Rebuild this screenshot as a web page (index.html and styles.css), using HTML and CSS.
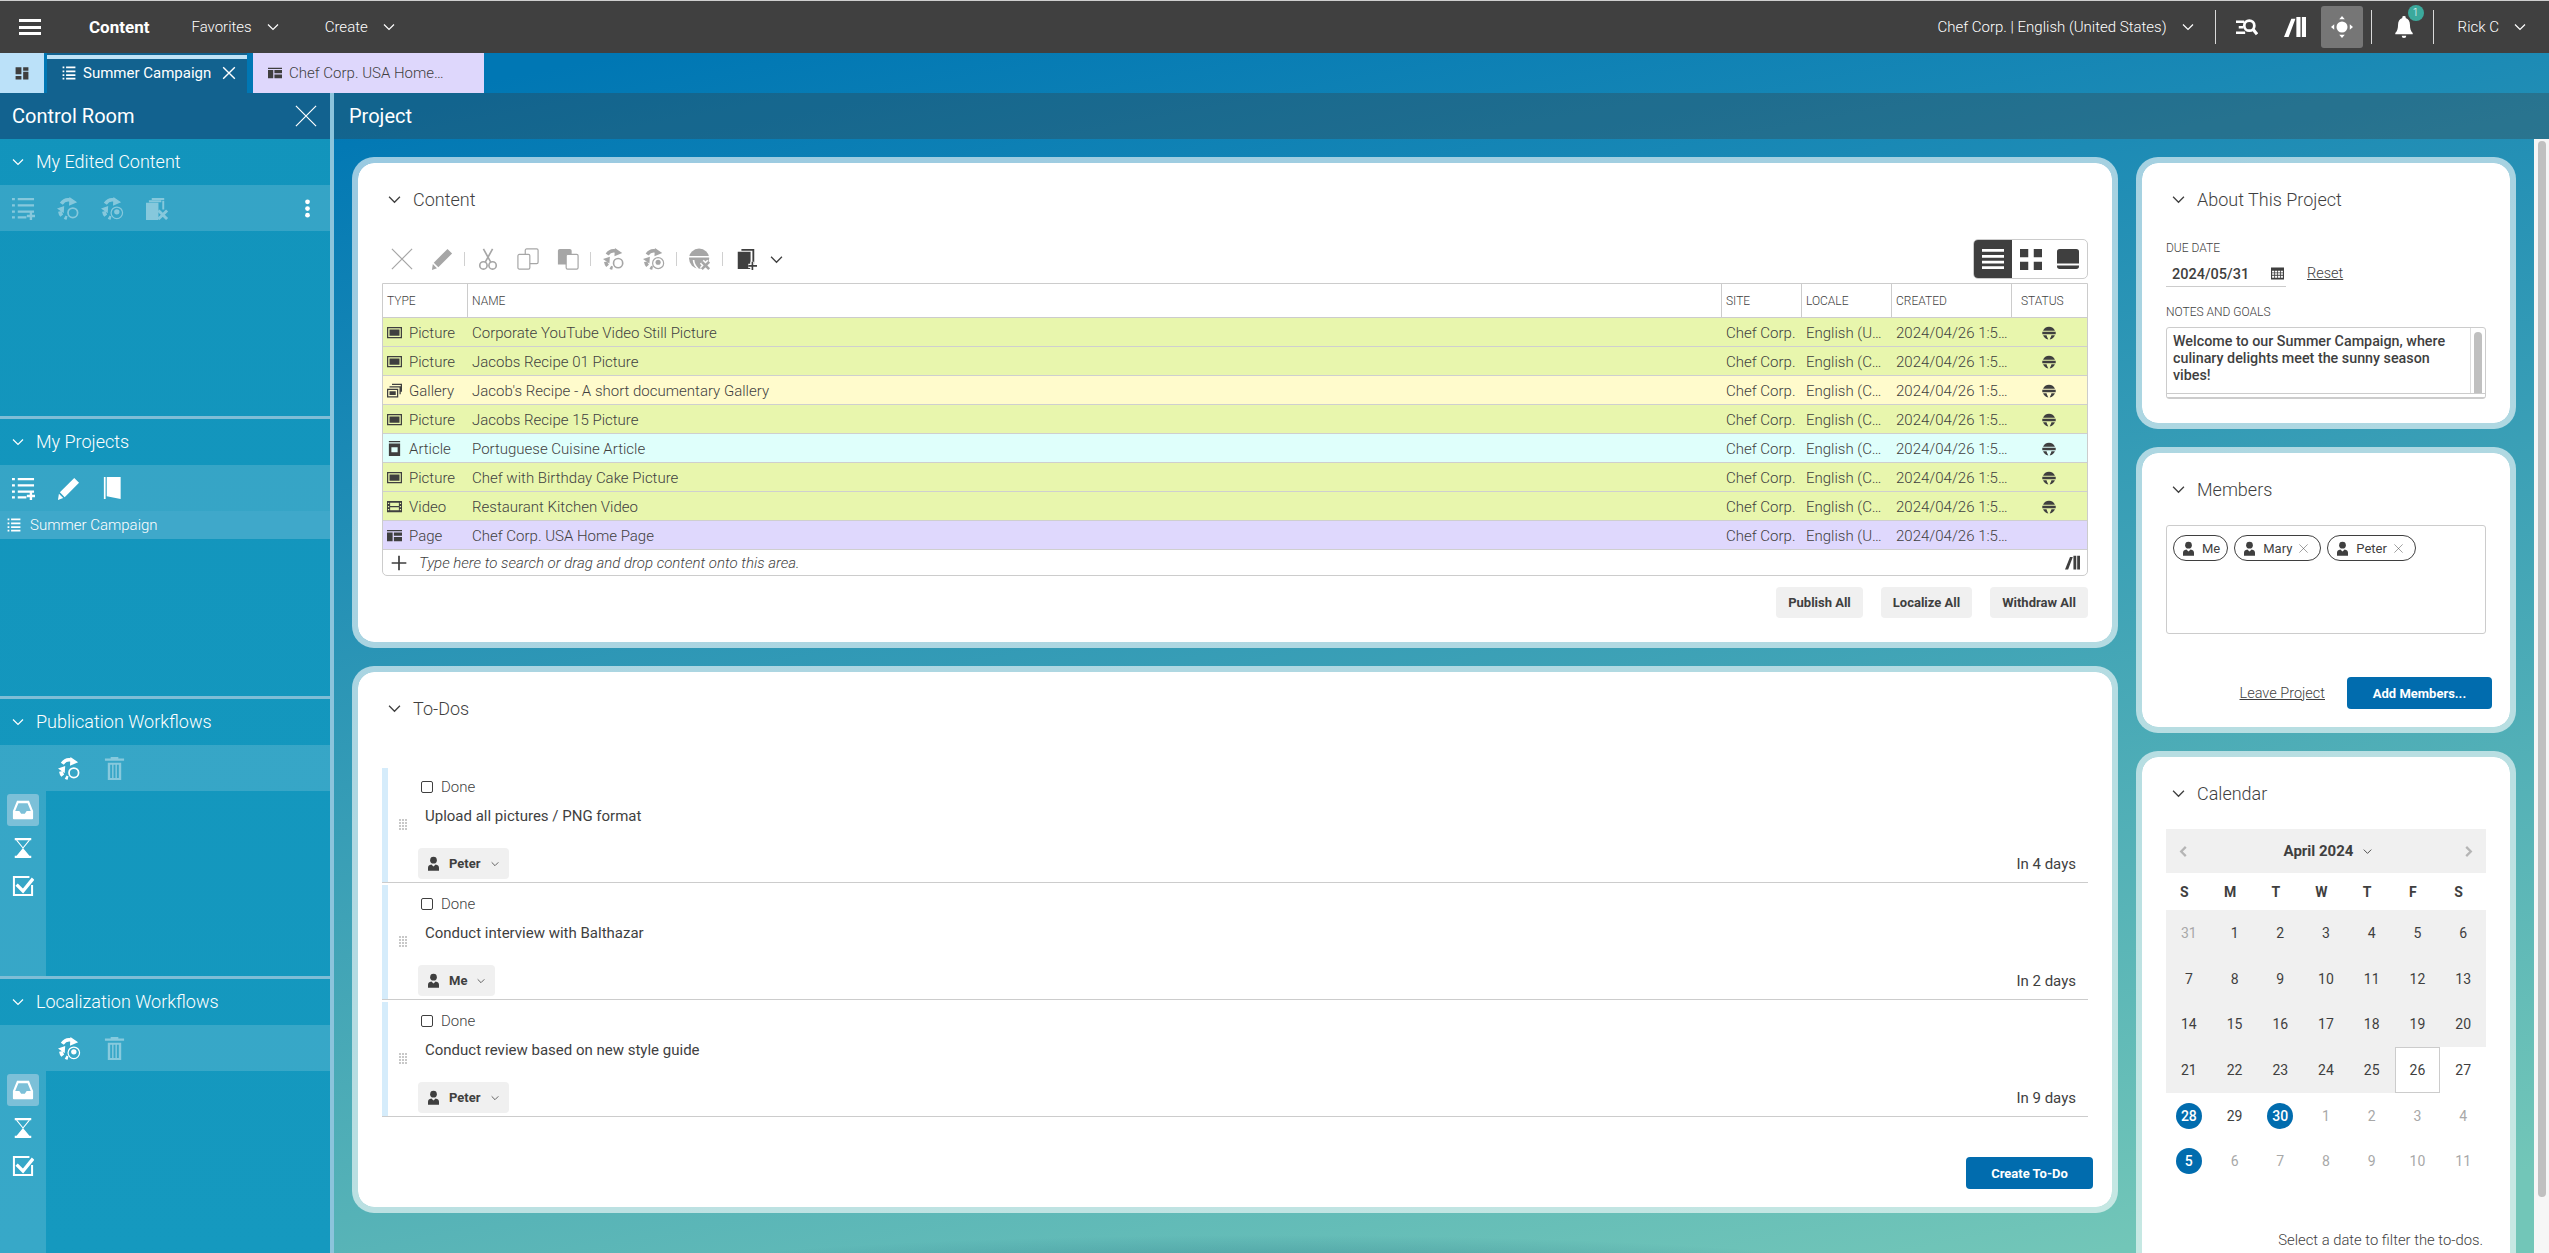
FILE: index.html
```html
<!DOCTYPE html>
<html lang="en">

<head>
  <meta charset="UTF-8" />
  <title>Content - Project</title>
  <link rel="stylesheet" href="styles.css">
</head>

<body>

  <!-- Icon sheet -->
  <svg class="sheet" xmlns="http://www.w3.org/2000/svg">
    <symbol id="i-chev" viewBox="0 0 24 24"><path d="M2 7l10 10L22 7" fill="none" stroke="currentColor" stroke-width="2.4"/></symbol>
    <symbol id="i-x" viewBox="0 0 24 24"><path d="M1 1l22 22M23 1L1 23" fill="none" stroke="currentColor" stroke-width="1.3"/></symbol>
    <symbol id="i-x2" viewBox="0 0 24 24"><path d="M2 2l20 20M22 2L2 22" fill="none" stroke="currentColor" stroke-width="2.4"/></symbol>
    <symbol id="i-home" viewBox="0 0 24 24"><path d="M1 2h10v12H1zM14 2h9v6h-9zM14 10h9v13h-9zM1 17h10v6H1z"/></symbol>
    <symbol id="i-list" viewBox="0 0 24 24"><path d="M1 1h3v3H1zM7 1h16v3H7zM1 7.500h3v3H1zM7 7.500h16v3H7zM1 14h3v3H1zM7 14h16v3H7zM1 20h3v3H1zM7 20h16v3H7z"/></symbol>
    <symbol id="i-listadd" viewBox="0 0 24 24"><path d="M0 1h3v2.500H0zM6 1h17v2.500H6zM0 7.500h3V10H0zM6 7.500h17V10H6zM0 14h3v2.500H0zM6 14h17v2.500H6zM0 20h3v2.500H0zM6 20h9v2.500H6zM18.500 14.500h2.500v4h3V21h-3v3h-2.500v-3h-3v-2.500h3z"/></symbol>
    <symbol id="i-page" viewBox="0 0 24 24"><path d="M0 3h24v2.200H0zM0 7h9v14H0zM11 7h13v5.500H11zM11 14.500h13V21H11z"/></symbol>
    <symbol id="i-cycle" viewBox="0 0 24 24"><g fill="none" stroke="currentColor" stroke-width="3.800"><path d="M4.500 7A9 9 0 0 1 14 3.200"/><path d="M5 19.500A9 9 0 0 1 3 15"/><path d="M8 21a9 9 0 0 0 2.500 1"/></g><path d="M13 0l8 5.500-8.500 3.500zM0 12l7.500-2.500-.5 7.500z"/><circle cx="16.500" cy="16.500" r="5" fill="none" stroke="currentColor" stroke-width="1.800"/></symbol>
    <symbol id="i-cycle2" viewBox="0 0 24 24"><g fill="none" stroke="currentColor" stroke-width="3.800"><path d="M4.500 7A9 9 0 0 1 14 3.200"/><path d="M5 19.500A9 9 0 0 1 3 15"/><path d="M8 21a9 9 0 0 0 2.500 1"/></g><path d="M13 0l8 5.500-8.500 3.500zM0 12l7.500-2.500-.5 7.500z"/><circle cx="16.500" cy="16.500" r="6" fill="none" stroke="currentColor" stroke-width="1.300"/><circle cx="16.500" cy="15.500" r="2.800"/></symbol>
    <symbol id="i-docsx" viewBox="0 0 24 24"><path d="M0 6h13v18H0zM3 3.500h13v2H3zM6 1h13v2H6zM17 4h2v9h-2z"/><path d="M13 14l9 9M22 14l-9 9" fill="none" stroke="currentColor" stroke-width="3"/></symbol>
    <symbol id="i-pencil" viewBox="0 0 24 24"><path d="M18 1l5 5L8 21l-5-5zM2 17.500L6.500 22 1 24z"/></symbol>
    <symbol id="i-door" viewBox="0 0 24 24"><path d="M3 0h1.800v23H3zM6 0h14.500v23L6 20z"/></symbol>
    <symbol id="i-trash" viewBox="0 0 24 24"><path d="M8 0h8v1.500h6v2.500H2V1.500h6zM5 6h14v18H5zM7.500 8v14h2V8zM11 8v14h2V8zM14.500 8v14h2V8z" fill-rule="evenodd"/></symbol>
    <symbol id="i-tray" viewBox="0 0 24 24"><path fill-rule="evenodd" d="M5.500 2h13L23 13v8a1 1 0 0 1-1 1H2a1 1 0 0 1-1-1v-8zM7 4.500L3.500 13H8l2 3h4l2-3h4.500L17 4.500z"/></symbol>
    <symbol id="i-glass" viewBox="0 0 24 24"><path d="M3 1h18v2.500H3zM12 12l7 8.500h2V23H3v-2.500h2z"/><path d="M5 3.500l7 8.500 7-8.500" fill="none" stroke="currentColor" stroke-width="1.200"/></symbol>
    <symbol id="i-check" viewBox="0 0 24 24"><path d="M1 1h18v2.200H3.200v17.600h17.600V11H23v12H1z"/><path d="M5 10.500l7 7L23 4" fill="none" stroke="currentColor" stroke-width="3.600"/></symbol>
    <symbol id="i-kebab" viewBox="0 0 24 24"><circle cx="12" cy="3.500" r="3"/><circle cx="12" cy="12" r="3"/><circle cx="12" cy="20.500" r="3"/></symbol>
    <symbol id="i-cut" viewBox="0 0 24 24"><g fill="none" stroke="currentColor" stroke-width="1.800"><circle cx="7" cy="19" r="4"/><circle cx="17" cy="19" r="4"/><path d="M9 15.500L17 1M15 15.500L7 1"/></g></symbol>
    <symbol id="i-copy" viewBox="0 0 24 24"><g fill="none" stroke="currentColor" stroke-width="1.300"><rect x="1" y="7" width="13" height="16" rx="1.500"/><path d="M9 7V2.500A1.500 1.500 0 0 1 10.500 1h11A1.500 1.500 0 0 1 23 2.500v13a1.500 1.500 0 0 1-1.500 1.500H14"/></g></symbol>
    <symbol id="i-paste" viewBox="0 0 24 24"><path d="M1 3a2 2 0 0 1 2-2h11a2 2 0 0 1 2 2v15H1z"/><rect x="10" y="7" width="13" height="16" rx="1.500" fill="#fff" stroke="currentColor" stroke-width="1.300"/></symbol>
    <symbol id="i-globex" viewBox="0 0 24 24"><circle cx="11" cy="11.500" r="11"/><path d="M0 9.500h22M5 13c0 4 2 7 5 10" fill="none" stroke="#fff" stroke-width="1.800"/><path d="M14 15l8 8M22 15l-8 8" fill="none" stroke="#fff" stroke-width="6"/><path d="M14 15l8 8M22 15l-8 8" fill="none" stroke="currentColor" stroke-width="2.800"/></symbol>
    <symbol id="i-newdoc" viewBox="0 0 24 24"><path d="M3 4h14v19H3zM7 1h14v17h-2V3H7z"/><path d="M19 15v9M14.500 19.500H24" fill="none" stroke="#fff" stroke-width="4.500"/><path d="M19 15v9M14.500 19.500H24" fill="none" stroke="currentColor" stroke-width="1.800"/></symbol>
    <symbol id="i-pic" viewBox="0 0 24 24"><path fill-rule="evenodd" d="M0 3h24v18H0zM2 5v14h20V5z"/><path d="M4 7h16v10H4z"/></symbol>
    <symbol id="i-gallery" viewBox="0 0 24 24"><path fill-rule="evenodd" d="M0 9h18v14H0zM2 11v10h14V11zM4 13h10v6H4z"/><path d="M4 5h18v13h-2V7H4zM8 1h16v13h-2V3H8z"/></symbol>
    <symbol id="i-article" viewBox="0 0 24 24"><path fill-rule="evenodd" d="M3 0h18v2H3zM3 4h18v20H3zM7 10v8h10v-8z"/></symbol>
    <symbol id="i-video" viewBox="0 0 24 24"><path fill-rule="evenodd" d="M0 3h24v18H0zM5 6v5h14V6zM5 13v5h14v-5zM1.500 6v2h2V6zM1.500 11v2h2v-2zM1.500 16v2h2v-2zM20.500 6v2h2V6zM20.500 11v2h2v-2zM20.500 16v2h2v-2z"/></symbol>
    <symbol id="i-status" viewBox="0 0 24 24"><path d="M1.800 8A11 11 0 0 1 22.200 8zM0.500 9.800h23V14h-23zM1.800 16h6c.8 3 2 5.500 3 7A11 11 0 0 1 1.800 16zM22.200 16h-6c-.8 3-2 5.500-3 7A11 11 0 0 0 22.200 16z"/></symbol>
    <symbol id="i-vlist" viewBox="0 0 24 24"><path d="M0 1h24v3H0zM0 7.500h24v3H0zM0 14h24v3H0zM0 20h24v3H0z"/></symbol>
    <symbol id="i-vgrid" viewBox="0 0 24 24"><path d="M0 1h9v9H0zM15 1h9v9h-9zM0 15h9v9H0zM15 15h9v9h-9z"/></symbol>
    <symbol id="i-vcard" viewBox="0 0 24 24"><path d="M3 1h18a3 3 0 0 1 3 3v13H0V4a3 3 0 0 1 3-3zM0 19h24v1a3 3 0 0 1-3 3H3a3 3 0 0 1-3-3z"/></symbol>
    <symbol id="i-person" viewBox="0 0 18 24"><circle cx="9" cy="6.500" r="5.500"/><path d="M0 24v-5c0-3 2-5 5.500-5.500L9 17l3.500-3.500C16 14 18 16 18 19v5z"/></symbol>
    <symbol id="i-lib" viewBox="0 0 24 24"><path d="M8 3h4.500L5 23H0zM13.500 1H18v22h-4.500zM19.500 1H24v22h-4.500z"/></symbol>
    <symbol id="i-search" viewBox="0 0 24 24"><path d="M0 5h9v2.500H0zM3 11h5v2.500H3zM0 17h10v2.500H0z"/><circle cx="14.500" cy="10.500" r="5.500" fill="none" stroke="currentColor" stroke-width="3"/><path d="M18.500 14.500L23 20" fill="none" stroke="currentColor" stroke-width="3.500"/></symbol>
    <symbol id="i-target" viewBox="0 0 24 24"><circle cx="12" cy="12" r="6"/><path d="M12 0l3 3.500H9zM12 24l-3-3.500h6zM0 12l3.500-3v6zM24 12l-3.500 3V9z"/></symbol>
    <symbol id="i-bell" viewBox="0 0 24 24"><path d="M12 0a1.800 1.800 0 0 1 1.800 2.200C17 3 18.500 6 18.500 9.500c0 4 .8 7 3 9V20h-19v-1.500c2.200-2 3-5 3-9 0-3.500 1.500-6.500 4.700-7.300A1.800 1.800 0 0 1 12 0zM9.500 21.500h5a2.500 2.500 0 0 1-5 0z"/></symbol>
    <symbol id="i-cal" viewBox="0 0 24 24"><path fill-rule="evenodd" d="M0 1h24v22H0zM2 7v3h4V7zM7.500 7v3h4V7zM13 7v3h4V7zM18.500 7v3H22V7zM2 11.500v3h4v-3zM7.500 11.500v3h4v-3zM13 11.500v3h4v-3zM18.500 11.500v3H22v-3zM2 16v4h4v-4zM7.500 16v4h4v-4zM13 16v4h4v-4zM18.500 16v4H22v-4z"/></symbol>
    <symbol id="i-plus" viewBox="0 0 24 24"><path d="M12 1v22M1 12h22" fill="none" stroke="currentColor" stroke-width="2.600"/></symbol>
    <symbol id="i-grip" viewBox="0 0 8 12"><path d="M0 0h2v2H0zM3 0h2v2H3zM6 0h2v2H6zM0 3h2v2H0zM3 3h2v2H3zM6 3h2v2H6zM0 6h2v2H0zM3 6h2v2H3zM6 6h2v2H6zM0 9h2v2H0zM3 9h2v2H3zM6 9h2v2H6z"/></symbol>
    <symbol id="i-left" viewBox="0 0 24 24"><path d="M17 2L7 12l10 10" fill="none" stroke="currentColor" stroke-width="5"/></symbol>
    <symbol id="i-right" viewBox="0 0 24 24"><path d="M7 2l10 10L7 22" fill="none" stroke="currentColor" stroke-width="5"/></symbol>
  </svg>

  <!-- Top bar -->
  <header class="topbar">
    <span class="burger-bars"><i></i><i></i><i></i></span>
    <span class="top-current">Content</span>
    <span class="top-menu top-fav">Favorites <svg class="ic chev-top"><use href="#i-chev"/></svg></span>
    <span class="top-menu top-create">Create <svg class="ic chev-top"><use href="#i-chev"/></svg></span>

    <div class="top-right">
      <span class="top-menu">Chef Corp. | English (United States) <svg class="ic chev-top"><use href="#i-chev"/></svg></span>
      <span class="top-sep sep-a"></span>
      <svg class="ic top-ic ic-search"><use href="#i-search"/></svg>
      <svg class="ic top-ic ic-lib"><use href="#i-lib"/></svg>
      <span class="top-active"><svg class="ic top-ic"><use href="#i-target"/></svg></span>
      <span class="top-sep sep-b"></span>
      <span class="bell">
        <svg class="ic top-ic"><use href="#i-bell"/></svg>
        <span class="badge">1</span>
      </span>
      <span class="top-sep sep-c"></span>
      <span class="top-menu top-user">Rick C <svg class="ic chev-top"><use href="#i-chev"/></svg></span>
    </div>
  </header>

  <!-- Tabs -->
  <nav class="tabs">
    <span class="tab-home"><svg class="ic ic-14"><use href="#i-home"/></svg></span>
    <span class="tab tab-active">
      <svg class="ic ic-14"><use href="#i-list"/></svg>
      <span class="tab-label">Summer Campaign</span>
      <svg class="ic ic-14 tab-close"><use href="#i-x2"/></svg>
    </span>
    <span class="tab tab-page">
      <svg class="ic ic-14"><use href="#i-page"/></svg>
      <span class="tab-label">Chef Corp. USA Home…</span>
    </span>
  </nav>

  <div class="workspace">

    <!-- Control room -->
    <aside class="control">
      <div class="control-title">
        <span>Control Room</span>
        <svg class="ic ic-22"><use href="#i-x"/></svg>
      </div>

      <section class="side">
        <div class="side-head"><svg class="ic side-chev"><use href="#i-chev"/></svg>My Edited Content</div>
        <div class="side-tools dim">
          <svg class="ic ic-23"><use href="#i-listadd"/></svg>
          <svg class="ic ic-23"><use href="#i-cycle"/></svg>
          <svg class="ic ic-23"><use href="#i-cycle2"/></svg>
          <svg class="ic ic-23"><use href="#i-docsx"/></svg>
          <svg class="ic kebab"><use href="#i-kebab"/></svg>
        </div>
      </section>

      <section class="side">
        <div class="side-head"><svg class="ic side-chev"><use href="#i-chev"/></svg>My Projects</div>
        <div class="side-tools">
          <svg class="ic ic-23"><use href="#i-listadd"/></svg>
          <svg class="ic ic-23"><use href="#i-pencil"/></svg>
          <svg class="ic ic-23"><use href="#i-door"/></svg>
        </div>
        <div class="side-row"><svg class="ic ic-14"><use href="#i-list"/></svg>Summer Campaign</div>
      </section>

      <section class="side">
        <div class="side-head"><svg class="ic side-chev"><use href="#i-chev"/></svg>Publication Workflows</div>
        <div class="side-tools indent">
          <svg class="ic ic-23"><use href="#i-cycle"/></svg>
          <svg class="ic ic-23 faint"><use href="#i-trash"/></svg>
        </div>
        <div class="side-body">
          <div class="rail">
            <span class="rail-on"><svg class="ic ic-22"><use href="#i-tray"/></svg></span>
            <svg class="ic ic-22 rail-glass"><use href="#i-glass"/></svg>
            <svg class="ic ic-22 rail-check"><use href="#i-check"/></svg>
          </div>
        </div>
      </section>

      <section class="side side-last">
        <div class="side-head"><svg class="ic side-chev"><use href="#i-chev"/></svg>Localization Workflows</div>
        <div class="side-tools indent">
          <svg class="ic ic-23"><use href="#i-cycle2"/></svg>
          <svg class="ic ic-23 faint"><use href="#i-trash"/></svg>
        </div>
        <div class="side-body">
          <div class="rail">
            <span class="rail-on"><svg class="ic ic-22"><use href="#i-tray"/></svg></span>
            <svg class="ic ic-22 rail-glass"><use href="#i-glass"/></svg>
            <svg class="ic ic-22 rail-check"><use href="#i-check"/></svg>
          </div>
        </div>
      </section>
    </aside>

    <!-- Project -->
    <main class="project">
      <div class="project-title">Project</div>
      <div class="project-scroll">
        <div class="board">

          <div class="col-main">
            <div class="card">
              <div class="card-head"><svg class="ic card-chev"><use href="#i-chev"/></svg>Content</div>

              <div class="toolbar">
                <svg class="ic ic-22 off"><use href="#i-x"/></svg>
                <svg class="ic ic-22 off"><use href="#i-pencil"/></svg>
                <span class="tool-sep"></span>
                <svg class="ic ic-22 off"><use href="#i-cut"/></svg>
                <svg class="ic ic-22 off"><use href="#i-copy"/></svg>
                <svg class="ic ic-22 off"><use href="#i-paste"/></svg>
                <span class="tool-sep"></span>
                <svg class="ic ic-22 off"><use href="#i-cycle"/></svg>
                <svg class="ic ic-22 off"><use href="#i-cycle2"/></svg>
                <span class="tool-sep"></span>
                <svg class="ic ic-22 off"><use href="#i-globex"/></svg>
                <span class="tool-sep"></span>
                <svg class="ic ic-22"><use href="#i-newdoc"/></svg>
                <svg class="ic tool-chev"><use href="#i-chev"/></svg>
                <div class="views">
                  <span class="view view-on"><svg class="ic ic-22"><use href="#i-vlist"/></svg></span>
                  <span class="view"><svg class="ic ic-22"><use href="#i-vgrid"/></svg></span>
                  <span class="view"><svg class="ic ic-22"><use href="#i-vcard"/></svg></span>
                </div>
              </div>

              <div class="grid-wrap">
                <table class="grid">
                  <colgroup>
                    <col class="c-type"><col><col class="c-site"><col class="c-locale"><col class="c-created"><col class="c-status">
                  </colgroup>
                  <thead>
                    <tr><th>Type</th><th>Name</th><th>Site</th><th>Locale</th><th>Created</th><th class="th-status">Status</th></tr>
                  </thead>
                  <tbody>
                    <tr class="r-pic">
                      <td><svg class="ic ic-15"><use href="#i-pic"/></svg>Picture</td><td>Corporate YouTube Video Still Picture</td><td>Chef Corp.</td><td>English (U…</td><td>2024/04/26 1:5…</td><td class="status"><svg class="ic ic-14"><use href="#i-status"/></svg></td>
                    </tr>
                    <tr class="r-pic">
                      <td><svg class="ic ic-15"><use href="#i-pic"/></svg>Picture</td><td>Jacobs Recipe 01 Picture</td><td>Chef Corp.</td><td>English (C…</td><td>2024/04/26 1:5…</td><td class="status"><svg class="ic ic-14"><use href="#i-status"/></svg></td>
                    </tr>
                    <tr class="r-gal">
                      <td><svg class="ic ic-15"><use href="#i-gallery"/></svg>Gallery</td><td>Jacob's Recipe - A short documentary Gallery</td><td>Chef Corp.</td><td>English (C…</td><td>2024/04/26 1:5…</td><td class="status"><svg class="ic ic-14"><use href="#i-status"/></svg></td>
                    </tr>
                    <tr class="r-pic">
                      <td><svg class="ic ic-15"><use href="#i-pic"/></svg>Picture</td><td>Jacobs Recipe 15 Picture</td><td>Chef Corp.</td><td>English (C…</td><td>2024/04/26 1:5…</td><td class="status"><svg class="ic ic-14"><use href="#i-status"/></svg></td>
                    </tr>
                    <tr class="r-art">
                      <td><svg class="ic ic-15"><use href="#i-article"/></svg>Article</td><td>Portuguese Cuisine Article</td><td>Chef Corp.</td><td>English (C…</td><td>2024/04/26 1:5…</td><td class="status"><svg class="ic ic-14"><use href="#i-status"/></svg></td>
                    </tr>
                    <tr class="r-pic">
                      <td><svg class="ic ic-15"><use href="#i-pic"/></svg>Picture</td><td>Chef with Birthday Cake Picture</td><td>Chef Corp.</td><td>English (C…</td><td>2024/04/26 1:5…</td><td class="status"><svg class="ic ic-14"><use href="#i-status"/></svg></td>
                    </tr>
                    <tr class="r-pic">
                      <td><svg class="ic ic-15"><use href="#i-video"/></svg>Video</td><td>Restaurant Kitchen Video</td><td>Chef Corp.</td><td>English (C…</td><td>2024/04/26 1:5…</td><td class="status"><svg class="ic ic-14"><use href="#i-status"/></svg></td>
                    </tr>
                    <tr class="r-page">
                      <td><svg class="ic ic-15"><use href="#i-page"/></svg>Page</td><td>Chef Corp. USA Home Page</td><td>Chef Corp.</td><td>English (U…</td><td>2024/04/26 1:5…</td><td class="status"></td>
                    </tr>
                  </tbody>
                </table>
                <div class="grid-add">
                  <svg class="ic add-plus"><use href="#i-plus"/></svg>
                  <span>Type here to search or drag and drop content onto this area.</span>
                  <svg class="ic add-lib"><use href="#i-lib"/></svg>
                </div>
              </div>

              <div class="grid-actions">
                <button class="btn-soft b-publish">Publish All</button>
                <button class="btn-soft b-localize">Localize All</button>
                <button class="btn-soft b-withdraw">Withdraw All</button>
              </div>
            </div>

            <div class="card card-todos">
              <div class="card-head"><svg class="ic card-chev"><use href="#i-chev"/></svg>To-Dos</div>

              <div class="todos">
                <div class="todo-wrap">
                  <div class="todo">
                    <svg class="ic grip"><use href="#i-grip"/></svg>
                    <div class="todo-body">
                      <div class="todo-done"><span class="box"></span>Done</div>
                      <div class="todo-text">Upload all pictures / PNG format</div>
                      <span class="assign a-peter"><svg class="ic person"><use href="#i-person"/></svg>Peter<svg class="ic assign-chev"><use href="#i-chev"/></svg></span>
                    </div>
                    <div class="todo-due">In 4 days</div>
                  </div>
                </div>
                <div class="todo-wrap">
                  <div class="todo">
                    <svg class="ic grip"><use href="#i-grip"/></svg>
                    <div class="todo-body">
                      <div class="todo-done"><span class="box"></span>Done</div>
                      <div class="todo-text">Conduct interview with Balthazar</div>
                      <span class="assign a-me"><svg class="ic person"><use href="#i-person"/></svg>Me<svg class="ic assign-chev"><use href="#i-chev"/></svg></span>
                    </div>
                    <div class="todo-due">In 2 days</div>
                  </div>
                </div>
                <div class="todo-wrap">
                  <div class="todo">
                    <svg class="ic grip"><use href="#i-grip"/></svg>
                    <div class="todo-body">
                      <div class="todo-done"><span class="box"></span>Done</div>
                      <div class="todo-text">Conduct review based on new style guide</div>
                      <span class="assign a-peter"><svg class="ic person"><use href="#i-person"/></svg>Peter<svg class="ic assign-chev"><use href="#i-chev"/></svg></span>
                    </div>
                    <div class="todo-due">In 9 days</div>
                  </div>
                </div>
              </div>

              <div class="todo-actions"><button class="btn-blue b-create">Create To-Do</button></div>
            </div>
          </div>

          <div class="col-side">
            <div class="card card-about">
              <div class="card-head"><svg class="ic card-chev"><use href="#i-chev"/></svg>About This Project</div>
              <div class="field-label">Due Date</div>
              <div class="date-row">
                <span class="date-input">2024/05/31<svg class="ic ic-13"><use href="#i-cal"/></svg></span>
                <span class="link">Reset</span>
              </div>
              <div class="field-label notes-label">Notes and Goals</div>
              <div class="notes">
                <div class="notes-main">
                  <p>Welcome to our Summer Campaign, where culinary delights meet the sunny season vibes!</p>
                  <div class="notes-bar"><span></span></div>
                </div>
                <div class="notes-resize"><span></span></div>
              </div>
            </div>

            <div class="card card-members">
              <div class="card-head"><svg class="ic card-chev"><use href="#i-chev"/></svg>Members</div>
              <div class="chips">
                <span class="chip"><svg class="ic person"><use href="#i-person"/></svg>Me</span>
                <span class="chip"><svg class="ic person"><use href="#i-person"/></svg>Mary<svg class="ic chip-x"><use href="#i-x"/></svg></span>
                <span class="chip"><svg class="ic person"><use href="#i-person"/></svg>Peter<svg class="ic chip-x"><use href="#i-x"/></svg></span>
              </div>
              <div class="member-actions">
                <span class="link">Leave Project</span>
                <button class="btn-blue b-members">Add Members...</button>
              </div>
            </div>

            <div class="card card-cal">
              <div class="card-head"><svg class="ic card-chev"><use href="#i-chev"/></svg>Calendar</div>
              <div class="cal-head">
                <svg class="ic cal-arrow"><use href="#i-left"/></svg>
                <span class="cal-month">April 2024<svg class="ic cal-chev"><use href="#i-chev"/></svg></span>
                <svg class="ic cal-arrow"><use href="#i-right"/></svg>
              </div>
              <div class="cal-week">
                <span>S</span><span>M</span><span>T</span><span>W</span><span>T</span><span>F</span><span>S</span>
              </div>
              <div class="cal-days">
                <span class="shade mute">31</span><span class="shade">1</span><span class="shade">2</span><span class="shade">3</span><span class="shade">4</span><span class="shade">5</span><span class="shade">6</span>
                <span class="shade">7</span><span class="shade">8</span><span class="shade">9</span><span class="shade">10</span><span class="shade">11</span><span class="shade">12</span><span class="shade">13</span>
                <span class="shade">14</span><span class="shade">15</span><span class="shade">16</span><span class="shade">17</span><span class="shade">18</span><span class="shade">19</span><span class="shade">20</span>
                <span class="shade">21</span><span class="shade">22</span><span class="shade">23</span><span class="shade">24</span><span class="shade">25</span><span class="today">26</span><span>27</span>
                <span><b class="dot">28</b></span><span>29</span><span><b class="dot">30</b></span><span class="mute">1</span><span class="mute">2</span><span class="mute">3</span><span class="mute">4</span>
                <span><b class="dot">5</b></span><span class="mute">6</span><span class="mute">7</span><span class="mute">8</span><span class="mute">9</span><span class="mute">10</span><span class="mute">11</span>
              </div>
              <div class="cal-note">Select a date to filter the to-dos.</div>
            </div>
          </div>

        </div>

        <div class="scrollbar"><span></span></div>
      </div>
    </main>
  </div>

</body>

</html>
```

FILE: styles.css
```css
* {
  box-sizing: border-box;
}

html,
body {
  height: 100%;
}

body {
  margin: 0;
  height: 1253px;
  overflow: hidden;
  display: flex;
  flex-direction: column;
  font-family: Roboto, "Noto Sans", sans-serif;
  color: #3f3f3f;
  background:
    radial-gradient(ellipse 620px 40px at 1270px 1275px, rgba(0, 70, 100, 0.35), transparent),
    linear-gradient(169deg, #0077b4 10%, #72c6b8 95%);
}

.sheet {
  display: none;
}

.ic {
  display: block;
  flex: none;
  fill: currentColor;
}

.ic-13 { width: 13px; height: 13px; }
.ic-14 { width: 14px; height: 14px; }
.ic-15 { width: 15px; height: 15px; }
.ic-22 { width: 22px; height: 22px; }
.ic-23 { width: 23px; height: 23px; }

.person {
  width: 11px;
  height: 15px;
}

/* Top bar */
.topbar {
  height: 53px;
  flex: none;
  display: flex;
  align-items: center;
  background: #404040;
  border-top: 1px solid #cfcfcf;
  color: #fff;
  font-size: 15px;
  font-weight: 300;
  padding-left: 19px;
}

.burger-bars {
  width: 22px;
  height: 16px;
  display: flex;
  flex-direction: column;
  justify-content: space-between;
}

.burger-bars i {
  height: 3px;
  background: #fff;
}

.top-current {
  margin-left: 48px;
  font-size: 17px;
  font-weight: 700;
}

.top-menu {
  display: flex;
  align-items: center;
}

.top-fav {
  margin-left: 42px;
}

.top-create {
  margin-left: 46px;
}

.chev-top {
  width: 12px;
  height: 12px;
  margin-left: 15px;
}

.top-right {
  margin-left: auto;
  display: flex;
  align-items: center;
  padding-right: 23px;
}

.top-sep {
  width: 1px;
  height: 34px;
  background: #d9d9d9;
}

.sep-a { margin-left: 21px; }
.sep-b { margin-left: 8px; }
.sep-c { margin-left: 18px; }

.top-ic {
  width: 22px;
  height: 22px;
}

.ic-search { margin-left: 20px; }
.ic-lib { margin-left: 26px; }

.top-active {
  width: 42px;
  height: 42px;
  margin-left: 15px;
  border-radius: 3px;
  background: #767676;
  display: flex;
  align-items: center;
  justify-content: center;
}

.bell {
  position: relative;
  margin-left: 21px;
}

.badge {
  position: absolute;
  top: -11px;
  left: 15px;
  width: 16px;
  height: 16px;
  border-radius: 50%;
  background: #3ba99c;
  font-size: 10px;
  line-height: 16px;
  text-align: center;
}

.top-user {
  margin-left: 24px;
}

/* Tabs */
.tabs {
  height: 40px;
  flex: none;
  display: flex;
}

.tab-home {
  width: 44px;
  background: #bbe1f9;
  display: flex;
  align-items: center;
  justify-content: center;
  color: #3f3f3f;
}

.tab {
  display: flex;
  align-items: center;
  font-size: 15px;
  padding-left: 15px;
}

.tab-label {
  margin-left: 7px;
}

.tab-active {
  width: 200px;
  margin-left: 3px;
  color: #fff;
  background: linear-gradient(#bfe3f7, #bfe3f7) 0 2px / 100% 4px no-repeat, #12628f;
}

.tab-close {
  margin-left: 11px;
}

.tab-page {
  width: 231px;
  margin-left: 6px;
  background: #ded7fc;
  font-weight: 300;
}

/* Control room */
.workspace {
  flex: 1;
  min-height: 0;
  display: flex;
}

.control {
  width: 334px;
  flex: none;
  display: flex;
  flex-direction: column;
  border-right: 4px solid #8cc4dc;
  background: linear-gradient(#1294bc, #1599bf);
  color: #fff;
}

.control-title {
  height: 46px;
  flex: none;
  display: flex;
  align-items: center;
  justify-content: space-between;
  padding: 0 13px 0 12px;
  background: #12628f;
  font-size: 20px;
}

.side {
  height: 280px;
  flex: none;
  display: flex;
  flex-direction: column;
  border-bottom: 3px solid #7ebdd6;
}

.side-last {
  flex: 1;
  min-height: 0;
  height: auto;
  border-bottom: 0;
}

.side-head {
  height: 45px;
  margin-bottom: 1px;
  flex: none;
  display: flex;
  align-items: center;
  padding-left: 12px;
  font-size: 18px;
  font-weight: 300;
}

.side-chev {
  width: 12px;
  height: 12px;
  margin-right: 12px;
}

.side-tools {
  height: 46px;
  flex: none;
  display: flex;
  align-items: center;
  gap: 21.500px;
  padding-left: 12px;
  background: rgba(255, 255, 255, 0.15);
}

.side-tools.dim .ic {
  opacity: 0.4;
}

.side-tools.dim .kebab {
  opacity: 1;
  width: 19px;
  height: 19px;
  margin-left: auto;
  margin-right: 13px;
}

.side-tools.indent {
  padding-left: 58px;
}

.faint {
  opacity: 0.4;
}

.side-row {
  height: 28px;
  flex: none;
  display: flex;
  align-items: center;
  gap: 9px;
  padding-left: 7px;
  background: #3fa8ca;
  font-size: 15px;
  font-weight: 300;
}

.side-body {
  flex: 1;
  min-height: 0;
  display: flex;
}

.rail {
  width: 46px;
  display: flex;
  flex-direction: column;
  align-items: center;
  padding-top: 3px;
  background: rgba(255, 255, 255, 0.15);
}

.rail-on {
  width: 32px;
  height: 32px;
  border-radius: 3px;
  background: #7cc0d8;
  display: flex;
  align-items: center;
  justify-content: center;
}

.rail-glass {
  margin-top: 11px;
}

.rail-check {
  margin-top: 16px;
}

/* Project */
.project {
  flex: 1;
  min-width: 0;
  display: flex;
  flex-direction: column;
}

.project-title {
  height: 46px;
  flex: none;
  display: flex;
  align-items: center;
  padding-left: 15px;
  background: rgba(60, 55, 55, 0.3);
  color: #fff;
  font-size: 20px;
}

.project-scroll {
  flex: 1;
  min-height: 0;
  display: flex;
  overflow: hidden;
}

.board {
  flex: 1;
  min-width: 0;
  display: flex;
  align-items: flex-start;
  gap: 18px;
  padding: 18px;
}

.scrollbar {
  width: 15px;
  flex: none;
  padding: 2px 3px 0 4px;
  background: #f6f6f6;
}

.scrollbar span {
  display: block;
  height: 1056px;
  border-radius: 4px;
  background: #c0c0c0;
}

.col-main {
  flex: 1;
  min-width: 0;
  display: flex;
  flex-direction: column;
  gap: 18px;
}

.col-side {
  width: 380px;
  flex: none;
  display: flex;
  flex-direction: column;
  gap: 18px;
}

.card {
  background: #fff;
  background-clip: padding-box;
  border: 6px solid rgba(255, 255, 255, 0.6);
  border-radius: 22px;
  padding: 24px;
}

.card-head {
  height: 24px;
  display: flex;
  align-items: center;
  font-size: 18px;
  font-weight: 300;
}

.card-chev {
  width: 13px;
  height: 13px;
  margin: 0 12px 0 6px;
}

/* Content grid */
.toolbar {
  height: 40px;
  margin-top: 28px;
  display: flex;
  align-items: center;
  padding-left: 9px;
}

.toolbar .ic {
  margin-right: 18px;
}

.toolbar .off {
  color: #a6a6a6;
}

.tool-sep {
  width: 1px;
  height: 14px;
  background: #d0d0d0;
  margin: 0 12px 0 -7px;
}

.toolbar .tool-chev {
  width: 13px;
  height: 13px;
  margin: 0 0 0 -5px;
}

.views {
  margin-left: auto;
  height: 40px;
  width: 115px;
  display: flex;
  border: 1px solid #ccc;
  border-radius: 5px;
  overflow: hidden;
}

.toolbar .views .ic {
  margin: 0;
}

.view {
  width: 38px;
  display: flex;
  align-items: center;
  justify-content: center;
}

.view-on {
  background: #3f3f3f;
  color: #fff;
}

.grid-wrap {
  margin-top: 4px;
  border: 1px solid #ccc;
  border-radius: 0 0 5px 5px;
  overflow: hidden;
}

.grid {
  width: 100%;
  table-layout: fixed;
  border-collapse: separate;
  border-spacing: 0;
  font-size: 15px;
  font-weight: 300;
}

.c-type { width: 84px; }
.c-site { width: 80px; }
.c-locale { width: 90px; }
.c-created { width: 120px; }
.c-status { width: 76px; }

.grid th {
  height: 34px;
  padding: 0 4px;
  text-align: left;
  font-size: 12px;
  font-weight: 300;
  text-transform: uppercase;
  border-bottom: 1px solid #ccc;
  border-left: 1px solid #ccc;
}

.grid th:first-child {
  border-left: 0;
  padding-left: 4px;
}

.grid .th-status {
  padding-left: 9px;
}

.grid td {
  height: 29px;
  padding: 1px 4px 0 5px;
  white-space: nowrap;
  overflow: hidden;
  border-bottom: 1px solid #cfcfcf;
}

.grid td:first-child {
  padding-left: 4px;
}

.grid td:first-child .ic {
  display: inline-block;
  vertical-align: -2px;
  margin-right: 7px;
}

.grid .status .ic {
  margin-left: 26px;
}

.r-pic { background: #e8f6ad; }
.r-gal { background: #fffbcc; }
.r-art { background: #dffffb; }
.r-page { background: #dfd8fd; }

.grid-add {
  height: 25px;
  display: flex;
  align-items: center;
  padding: 0 7px 0 8px;
  font-size: 15px;
  font-style: italic;
  font-weight: 300;
}

.add-plus {
  width: 16px;
  height: 16px;
  margin-right: 12px;
}

.add-lib {
  width: 15px;
  height: 15px;
  margin-left: auto;
}

.grid-actions {
  margin-top: 11px;
  display: flex;
  justify-content: flex-end;
  gap: 18px;
}

.btn-soft,
.btn-blue {
  border: 0;
  border-radius: 4px;
  font-family: inherit;
  font-size: 13px;
  font-weight: 700;
  padding: 0;
}

.btn-soft {
  height: 31px;
  background: #f0f0f0;
  color: #3f3f3f;
}

.btn-blue {
  height: 32px;
  background: #016cae;
  color: #fff;
}

.b-publish { width: 87px; }
.b-localize { width: 91px; }
.b-withdraw { width: 98px; }
.b-create { width: 127px; }
.b-members { width: 145px; }

/* To-dos */
.card-todos {
  padding-bottom: 18px;
}

.todos {
  margin-top: 48px;
  width: 1706px;
}

.todo-wrap {
  border-bottom: 1px solid #ccc;
  margin-bottom: 2px;
}

.todo {
  height: 114px;
  display: flex;
  align-items: center;
  border-left: 6px solid #d5ecfb;
}

.grip {
  width: 8px;
  height: 12px;
  margin-left: 11px;
  color: #c8c8c8;
}

.todo-body {
  margin-left: 11px;
  height: 100%;
  display: flex;
  flex-direction: column;
  align-items: flex-start;
}

.todo-done {
  height: 14px;
  margin-top: 12px;
  padding-left: 3px;
  display: flex;
  align-items: center;
  font-size: 15px;
  font-weight: 300;
}

.box {
  width: 12px;
  height: 12px;
  border: 1.500px solid #3f3f3f;
  border-radius: 2px;
  margin-right: 8px;
}

.todo-text {
  margin-top: 13px;
  padding-left: 7px;
  font-size: 15px;
  line-height: 18px;
}

.assign {
  height: 31px;
  margin-top: auto;
  margin-bottom: 3px;
  border-radius: 4px;
  background: #f0f0f0;
  display: flex;
  align-items: center;
  padding-left: 10px;
  font-size: 13px;
  font-weight: 700;
}

.assign .person {
  margin-right: 10px;
}

.a-peter { width: 91px; }
.a-me { width: 77px; }

.assign-chev {
  width: 8px;
  height: 8px;
  margin-left: 10px;
}

.todo-due {
  margin: auto 12px 9px auto;
  font-size: 15px;
}

.todo-actions {
  margin-top: 40px;
  margin-right: -5px;
  display: flex;
  justify-content: flex-end;
}

/* About */
.field-label {
  margin-top: 30px;
  font-size: 12px;
  font-weight: 300;
  text-transform: uppercase;
  line-height: 14px;
}

.date-row {
  margin-top: 10px;
  display: flex;
  align-items: flex-start;
}

.date-input {
  width: 120px;
  height: 22px;
  padding: 0 2px 0 6px;
  display: flex;
  align-items: flex-start;
  justify-content: space-between;
  border-bottom: 1px solid #ccc;
  font-size: 14.500px;
  font-weight: 500;
  line-height: 20px;
}

.date-input .ic {
  margin-top: 2px;
}

.link {
  text-decoration: underline;
  font-size: 14.500px;
  font-weight: 300;
}

.date-row .link {
  margin-left: 21px;
}

.notes-label {
  margin-top: 18px;
}

.notes {
  margin-top: 8px;
  width: 320px;
  height: 72px;
  border: 1px solid #ccc;
  border-radius: 3px;
  display: flex;
  flex-direction: column;
}

.notes-main {
  flex: 1;
  min-height: 0;
  display: flex;
}

.notes-main p {
  flex: 1;
  margin: 5px 6px 0 6px;
  font-size: 14.300px;
  font-weight: 500;
  line-height: 17px;
}

.notes-bar {
  width: 15px;
  flex: none;
  border-left: 1px solid #ddd;
  padding: 4px 3px 0 3px;
}

.notes-bar span {
  display: block;
  height: 100%;
  border-radius: 4px 4px 0 0;
  background: #c0c0c0;
}

.notes-resize {
  height: 5px;
  flex: none;
  border-top: 1px solid #ccc;
  border-bottom: 1px solid #ccc;
  display: flex;
  justify-content: center;
}

.notes-resize span {
  width: 16px;
  height: 3px;
  background: #fff;
}

/* Members */
.card-members {
  padding-bottom: 18px;
}

.chips {
  margin-top: 24px;
  width: 320px;
  height: 109px;
  border: 1px solid #ccc;
  border-radius: 3px;
  padding: 9px 6px;
  display: flex;
  align-items: flex-start;
  gap: 6px;
}

.chip {
  height: 26px;
  border: 1px solid #3f3f3f;
  border-radius: 13px;
  padding: 0 7px 0 9px;
  display: flex;
  align-items: center;
  font-size: 13px;
}

.chip .person {
  margin-right: 8px;
}

.chip-x {
  width: 9px;
  height: 9px;
  margin: 0 5px 0 7px;
}

.member-actions {
  margin-top: 43px;
  margin-right: -6px;
  display: flex;
  align-items: center;
  justify-content: flex-end;
  gap: 22px;
}

/* Calendar */
.card-cal {
  padding-bottom: 40px;
}

.cal-head {
  margin-top: 24px;
  width: 320px;
  height: 44px;
  background: #f0f0f0;
  display: flex;
  align-items: center;
  justify-content: space-between;
  padding: 0 12px;
  color: #b5b5b5;
}

.cal-arrow {
  width: 11px;
  height: 11px;
}

.cal-month {
  display: flex;
  align-items: center;
  margin-left: 4px;
  color: #3f3f3f;
  font-size: 15px;
  font-weight: 700;
}

.cal-chev {
  width: 9px;
  height: 9px;
  margin-left: 10px;
}

.cal-week,
.cal-days {
  width: 320px;
  display: grid;
  grid-template-columns: repeat(7, 1fr);
  text-align: center;
}

.cal-week {
  height: 37px;
  align-items: center;
  font-size: 14px;
  font-weight: 700;
}

.cal-week span {
  padding-right: 9px;
}

.cal-days {
  font-size: 14px;
  grid-auto-rows: 45.700px;
}

.cal-days span {
  display: flex;
  align-items: center;
  justify-content: center;
}

.cal-days .shade {
  background: #f0f0f0;
}

.cal-days .mute {
  color: #a8a8a8;
}

.cal-days .today {
  border: 1px solid #ccc;
}

.dot {
  width: 26px;
  height: 26px;
  border-radius: 50%;
  background: #016cae;
  color: #fff;
  font-weight: 500;
  display: flex;
  align-items: center;
  justify-content: center;
}

.cal-note {
  margin-top: 47px;
  width: 317px;
  text-align: right;
  font-size: 14.800px;
  font-weight: 300;
  line-height: 18px;
}
```
